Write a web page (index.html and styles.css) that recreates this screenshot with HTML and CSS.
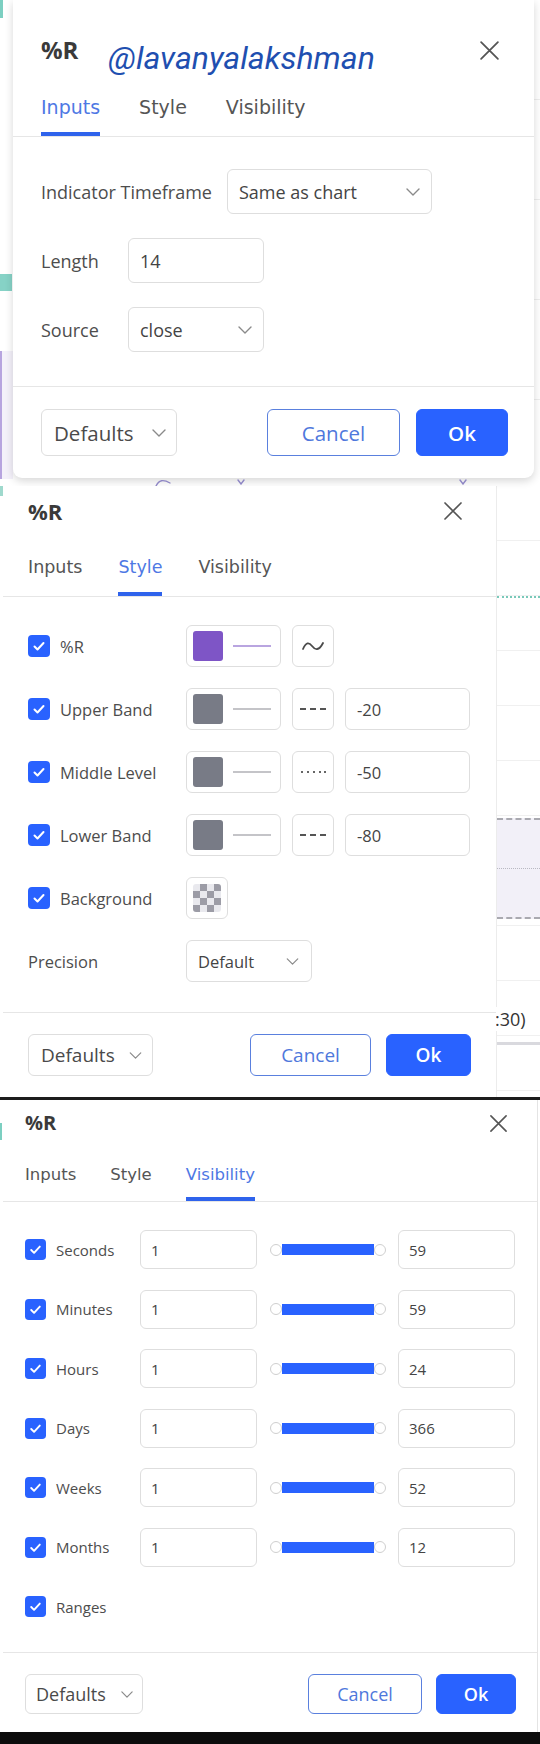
FILE: index.html
```html
<!DOCTYPE html>
<html lang="en">
<head>
<meta charset="utf-8">
<title>%R settings</title>
<link rel="stylesheet" href="styles.css">
</head>
<body>

<!-- Screenshot 1: Inputs tab -->
<section class="shot shot-1">
  <div class="strip strip-l1"><i class="teal-top"></i><i class="teal-bar"></i><i class="lav"></i></div>
  <div class="dialog d1">
    <header class="head">
      <span class="title">%R</span>
      <span class="close"><svg viewBox="0 0 20 20"><path d="M2 2L18 18M18 2L2 18"/></svg></span>
    </header>
    <div class="watermark">@lavanyalakshman</div>
    <nav class="tabs">
      <span class="tab active">Inputs</span><span class="tab">Style</span><span class="tab">Visibility</span>
    </nav>
    <div class="body">
      <div class="row">
        <span class="label wide">Indicator Timeframe</span>
        <div class="field select tf"><span>Same as chart</span><svg class="chev" viewBox="0 0 14 8"><path d="M1 1l6 6 6-6"/></svg></div>
      </div>
      <div class="row">
        <span class="label fixed">Length</span>
        <div class="field len"><span>14</span></div>
      </div>
      <div class="row">
        <span class="label fixed">Source</span>
        <div class="field select len"><span>close</span><svg class="chev" viewBox="0 0 14 8"><path d="M1 1l6 6 6-6"/></svg></div>
      </div>
    </div>
    <footer class="foot">
      <div class="btn defaults"><span>Defaults</span><svg class="chev" viewBox="0 0 14 8"><path d="M1 1l6 6 6-6"/></svg></div>
      <div class="btn cancel">Cancel</div>
      <div class="btn ok">Ok</div>
    </footer>
  </div>
  <div class="strip strip-r1"></div>
  <svg class="mark mark-a" viewBox="0 0 16 8"><path d="M1 7C4 1 8 0 15 4"/></svg>
  <svg class="mark mark-b" viewBox="0 0 8 6"><path d="M1 1l3 4 3-4"/></svg>
  <svg class="mark mark-c" viewBox="0 0 8 6"><path d="M1 1l3 4 3-4"/></svg>
</section>

<!-- Screenshot 2: Style tab -->
<section class="shot shot-2">
  <div class="strip strip-l2"><i class="teal-mark"></i></div>
  <div class="dialog d2">
    <header class="head">
      <span class="title">%R</span>
      <span class="close"><svg viewBox="0 0 20 20"><path d="M2 2L18 18M18 2L2 18"/></svg></span>
    </header>
    <nav class="tabs">
      <span class="tab">Inputs</span><span class="tab active">Style</span><span class="tab">Visibility</span>
    </nav>
    <div class="body">
      <div class="row">
        <label class="chk"><span class="cb"><svg viewBox="0 0 22 22"><rect width="22" height="22" rx="4"/><path d="M6.5 11.5l3 3 6-6.5"/></svg></span><span class="label">%R</span></label>
        <div class="field colorbtn"><span class="sw purple"></span><span class="ln purple"></span></div>
        <div class="field stylebtn"><svg class="ico-wave" viewBox="0 0 22 12"><path d="M1 9C4 2 7 2 10 6S17 11 21 3"/></svg></div>
      </div>
      <div class="row">
        <label class="chk"><span class="cb"><svg viewBox="0 0 22 22"><rect width="22" height="22" rx="4"/><path d="M6.5 11.5l3 3 6-6.5"/></svg></span><span class="label">Upper Band</span></label>
        <div class="field colorbtn"><span class="sw gray"></span><span class="ln"></span></div>
        <div class="field stylebtn"><svg class="ico-dash" viewBox="0 0 26 2"><path d="M0 1h6M10 1h6M20 1h6"/></svg></div>
        <div class="field val"><span>-20</span></div>
      </div>
      <div class="row">
        <label class="chk"><span class="cb"><svg viewBox="0 0 22 22"><rect width="22" height="22" rx="4"/><path d="M6.5 11.5l3 3 6-6.5"/></svg></span><span class="label">Middle Level</span></label>
        <div class="field colorbtn"><span class="sw gray"></span><span class="ln"></span></div>
        <div class="field stylebtn"><svg class="ico-dot" viewBox="0 0 26 2"><path d="M1 1h2M7 1h2M13 1h2M19 1h2M24 1h2"/></svg></div>
        <div class="field val"><span>-50</span></div>
      </div>
      <div class="row">
        <label class="chk"><span class="cb"><svg viewBox="0 0 22 22"><rect width="22" height="22" rx="4"/><path d="M6.5 11.5l3 3 6-6.5"/></svg></span><span class="label">Lower Band</span></label>
        <div class="field colorbtn"><span class="sw gray"></span><span class="ln"></span></div>
        <div class="field stylebtn"><svg class="ico-dash" viewBox="0 0 26 2"><path d="M0 1h6M10 1h6M20 1h6"/></svg></div>
        <div class="field val"><span>-80</span></div>
      </div>
      <div class="row">
        <label class="chk"><span class="cb"><svg viewBox="0 0 22 22"><rect width="22" height="22" rx="4"/><path d="M6.5 11.5l3 3 6-6.5"/></svg></span><span class="label">Background</span></label>
        <div class="field bgbtn"><span class="checker"></span></div>
      </div>
      <div class="row">
        <span class="label prec">Precision</span>
        <div class="field select precsel"><span>Default</span><svg class="chev" viewBox="0 0 14 8"><path d="M1 1l6 6 6-6"/></svg></div>
      </div>
    </div>
    <footer class="foot">
      <div class="btn defaults"><span>Defaults</span><svg class="chev" viewBox="0 0 14 8"><path d="M1 1l6 6 6-6"/></svg></div>
      <div class="btn cancel">Cancel</div>
      <div class="btn ok">Ok</div>
    </footer>
  </div>
  <div class="strip strip-r2">
    <i class="teal-dots"></i>
    <i class="band"><i class="band-mid"></i></i>
    <span class="axis-text">:30)</span>
    <i class="axis-line"></i>
  </div>
</section>

<div class="sep"></div>

<!-- Screenshot 3: Visibility tab -->
<section class="shot shot-3">
  <div class="strip strip-l3"><i class="teal-mark3"></i></div>
  <div class="dialog d3">
    <header class="head">
      <span class="title">%R</span>
      <span class="close"><svg viewBox="0 0 20 20"><path d="M2 2L18 18M18 2L2 18"/></svg></span>
    </header>
    <nav class="tabs">
      <span class="tab">Inputs</span><span class="tab">Style</span><span class="tab active">Visibility</span>
    </nav>
    <div class="body">
      <div class="row">
        <label class="chk"><span class="cb"><svg viewBox="0 0 22 22"><rect width="22" height="22" rx="4"/><path d="M6.5 11.5l3 3 6-6.5"/></svg></span><span class="label">Seconds</span></label>
        <div class="field num"><span>1</span></div>
        <div class="slider"><span class="knob"></span><span class="track"></span><span class="knob"></span></div>
        <div class="field num"><span>59</span></div>
      </div>
      <div class="row">
        <label class="chk"><span class="cb"><svg viewBox="0 0 22 22"><rect width="22" height="22" rx="4"/><path d="M6.5 11.5l3 3 6-6.5"/></svg></span><span class="label">Minutes</span></label>
        <div class="field num"><span>1</span></div>
        <div class="slider"><span class="knob"></span><span class="track"></span><span class="knob"></span></div>
        <div class="field num"><span>59</span></div>
      </div>
      <div class="row">
        <label class="chk"><span class="cb"><svg viewBox="0 0 22 22"><rect width="22" height="22" rx="4"/><path d="M6.5 11.5l3 3 6-6.5"/></svg></span><span class="label">Hours</span></label>
        <div class="field num"><span>1</span></div>
        <div class="slider"><span class="knob"></span><span class="track"></span><span class="knob"></span></div>
        <div class="field num"><span>24</span></div>
      </div>
      <div class="row">
        <label class="chk"><span class="cb"><svg viewBox="0 0 22 22"><rect width="22" height="22" rx="4"/><path d="M6.5 11.5l3 3 6-6.5"/></svg></span><span class="label">Days</span></label>
        <div class="field num"><span>1</span></div>
        <div class="slider"><span class="knob"></span><span class="track"></span><span class="knob"></span></div>
        <div class="field num"><span>366</span></div>
      </div>
      <div class="row">
        <label class="chk"><span class="cb"><svg viewBox="0 0 22 22"><rect width="22" height="22" rx="4"/><path d="M6.5 11.5l3 3 6-6.5"/></svg></span><span class="label">Weeks</span></label>
        <div class="field num"><span>1</span></div>
        <div class="slider"><span class="knob"></span><span class="track"></span><span class="knob"></span></div>
        <div class="field num"><span>52</span></div>
      </div>
      <div class="row">
        <label class="chk"><span class="cb"><svg viewBox="0 0 22 22"><rect width="22" height="22" rx="4"/><path d="M6.5 11.5l3 3 6-6.5"/></svg></span><span class="label">Months</span></label>
        <div class="field num"><span>1</span></div>
        <div class="slider"><span class="knob"></span><span class="track"></span><span class="knob"></span></div>
        <div class="field num"><span>12</span></div>
      </div>
      <div class="row">
        <label class="chk"><span class="cb"><svg viewBox="0 0 22 22"><rect width="22" height="22" rx="4"/><path d="M6.5 11.5l3 3 6-6.5"/></svg></span><span class="label">Ranges</span></label>
      </div>
    </div>
    <footer class="foot">
      <div class="btn defaults"><span>Defaults</span><svg class="chev" viewBox="0 0 14 8"><path d="M1 1l6 6 6-6"/></svg></div>
      <div class="btn cancel">Cancel</div>
      <div class="btn ok">Ok</div>
    </footer>
  </div>
  <div class="strip strip-r3"></div>
</section>

<div class="end"></div>

</body>
</html>
```

FILE: styles.css
```css
* { box-sizing: border-box; }
html, body { margin: 0; padding: 0; }
body {
  width: 540px;
  height: 1744px;
  overflow: hidden;
  background: #ffffff;
  font-family: "Open Sans", "Noto Sans", sans-serif;
  color: #4a4a4a;
}
i { display: block; font-style: normal; }

/* ---------- screenshot frames ---------- */
.shot { display: flex; align-items: flex-start; }
.shot-1 { height: 486px; background: #fff; position: relative; }
.shot-2 { height: 611px; }
.shot-3 { height: 632px; }
.sep { height: 3px; background: #1c1c1c; }
.end { height: 12px; background: #0c0c0c; }

/* chart marks peeking out below dialog 1 */
.mark { position: absolute; top: 479px; fill: none; stroke: #8e86c4; stroke-width: 1.4; stroke-linecap: round; }
.mark-a { left: 155px; width: 16px; height: 8px; }
.mark-b { left: 237px; width: 8px; height: 6px; }
.mark-c { left: 459px; width: 8px; height: 6px; }

/* ---------- chart leftovers around dialogs ---------- */
.strip { align-self: stretch; display: flex; flex-direction: column; background: #fff; }
.strip-l1 { width: 13px; }
.teal-top { width: 3px; height: 18px; background: #7ccfc1; }
.teal-bar { width: 12px; height: 17px; margin-top: 256px; background: #86d2c6; }
.lav { width: 13px; height: 128px; margin-top: 60px; background: #f4f1fa; border-left: 2px solid #b7a4df; }
.strip-r1 {
  width: 6px;
  background: repeating-linear-gradient(to bottom, #fff 0 99px, #eeeeee 99px 100px);
}
.strip-l2 { width: 3px; }
.teal-mark { width: 3px; height: 10px; margin-top: 0; background: #9fd9cd; }
.strip-r2 {
  width: 44px;
  padding-top: 110px;
  border-left: 1px solid #ececec;
  background: repeating-linear-gradient(to bottom, #fff 0 54px, #f0f0f0 54px 55px);
}
.teal-dots { height: 0; border-top: 2px dotted #79c9b9; }
.band {
  margin-top: 220px;
  height: 101px;
  background: #f2f0f8;
  border-top: 2px dashed #a9a9b0;
  border-bottom: 2px dashed #a9a9b0;
  display: flex;
  align-items: center;
}
.band-mid { width: 100%; border-top: 1px dotted #b9b9c2; }
.axis-text {
  margin-top: 88px;
  margin-left: -2px;
  font-size: 18px;
  line-height: 24px;
  color: #333;
  background: #fff;
}
.axis-line { margin-top: 11px; height: 3px; background: #d9d9de; }
.strip-l3 { width: 3px; }
.teal-mark3 { width: 2px; height: 17px; margin-top: 23px; background: #7ccfc1; }
.strip-r3 { width: 3px; border-left: 1px solid #e4e4e4; }

/* ---------- dialog shared ---------- */
.dialog { position: relative; background: #fff; display: flex; flex-direction: column; }
.head { display: flex; justify-content: space-between; align-items: center; }
.title { font-weight: 700; color: #3a3a3a; }
.close { display: flex; }
.close svg { display: block; }
.close path { stroke: #555; stroke-width: 1.7; fill: none; stroke-linecap: round; }

.tabs { display: flex; border-bottom: 1px solid #e6e6e6; }
.tab {
  font-family: "DejaVu Sans", Verdana, sans-serif;
  color: #555;
  border-bottom: 4px solid transparent;
}
.tab.active { color: #4e78e4; border-bottom-color: #2f63ec; }

.body { display: flex; flex-direction: column; }
.row { display: flex; align-items: center; }
.label { color: #4d4d4d; white-space: nowrap; }
.chk { display: flex; align-items: center; }
.cb { display: flex; flex: none; }
.cb svg { width: 100%; height: 100%; }
.cb rect { fill: #2962ff; }
.cb path { fill: none; stroke: #fff; stroke-width: 2; stroke-linecap: round; stroke-linejoin: round; }

.field {
  height: 100%;
  display: flex;
  align-items: center;
  border: 1px solid #dedede;
  border-radius: 6px;
  color: #444;
  flex: none;
}
.select { justify-content: space-between; }
.chev { display: block; flex: none; }
.chev path { fill: none; stroke: #8a8a8a; stroke-width: 1.4; stroke-linecap: round; stroke-linejoin: round; }

.foot { display: flex; align-items: center; border-top: 1px solid #e6e6e6; }
.btn {
  height: 100%;
  display: flex;
  align-items: center;
  justify-content: center;
  border-radius: 6px;
  border: 1px solid #dedede;
  white-space: nowrap;
}
.defaults { justify-content: space-between; color: #4a4a4a; }
.cancel { margin-left: auto; border-color: #5a80de; color: #4f78dc; }
.ok { background: #2962ff; border-color: #2962ff; color: #fff; font-weight: 600; }

/* ---------- dialog 1 : Inputs ---------- */
.d1 {
  width: 521px;
  height: 478px;
  font-size: 18px;
  border-radius: 0 0 9px 9px;
  box-shadow: 0 3px 9px rgba(0, 0, 0, 0.16);
}
.d1 .head { height: 70px; padding: 30px 34px 0 28px; }
.d1 .title { font-size: 24px; line-height: 40px; }
.d1 .close svg { width: 21px; height: 21px; }
.watermark {
  position: absolute;
  left: 95px;
  top: 40px;
  font-family: Roboto, "Liberation Sans", sans-serif;
  font-style: italic;
  font-size: 32px;
  line-height: 36px;
  color: #1f4fb0;
  white-space: nowrap;
}
.d1 .tabs { padding: 25px 28px 0; gap: 39px; }
.d1 .tab { font-size: 19px; line-height: 24px; padding-bottom: 13px; }
.d1 .body { padding: 32px 28px 34px; gap: 24px; }
.d1 .row { height: 45px; }
.d1 .label.wide { width: 186px; }
.d1 .label.fixed { width: 87px; }
.d1 .field { padding: 0 11px 0 11px; }
.d1 .tf { width: 205px; }
.d1 .len { width: 136px; }
.d1 .chev { width: 14px; height: 8px; }
.d1 .foot { padding: 22px 26px 22px 28px; height: 92px; gap: 16px; font-size: 20.5px; }
.d1 .defaults { width: 136px; padding: 0 10px 0 12px; }
.d1 .cancel { width: 133px; }
.d1 .ok { width: 92px; }

/* ---------- dialog 2 : Style ---------- */
.d2 {
  width: 493px;
  height: 611px;
  font-size: 16.5px;
  border-radius: 0 0 6px 6px;
}
.d2 .head { height: 40px; padding: 10px 33px 0 25px; }
.d2 .title { font-size: 22px; line-height: 30px; }
.d2 .close svg { width: 20px; height: 20px; }
.d2 .tabs { padding: 30px 25px 0; gap: 36px; }
.d2 .tab { font-size: 17.5px; line-height: 22px; padding-bottom: 14px; }
.d2 .body { padding: 28px 25px 30px; gap: 21px; }
.d2 .row { height: 42px; }
.d2 .chk { width: 158px; gap: 10px; }
.d2 .cb { width: 22px; height: 22px; }
.d2 .label.prec { width: 158px; }
.d2 .colorbtn { width: 95px; padding-left: 6px; }
.sw { width: 30px; height: 30px; border-radius: 3px; background: #787b86; }
.sw.purple { background: #7e55c6; }
.ln { width: 38px; height: 2px; margin-left: 10px; background: #c4c4c8; }
.ln.purple { background: #b9a5e0; }
.d2 .stylebtn { width: 42px; margin-left: 11px; justify-content: center; }
.ico-wave { width: 22px; height: 12px; }
.ico-wave path { fill: none; stroke: #4a4a4a; stroke-width: 1.8; stroke-linecap: round; }
.ico-dash, .ico-dot { width: 26px; height: 2px; }
.ico-dash path { stroke: #555; stroke-width: 2; }
.ico-dot path { stroke: #666; stroke-width: 2; }
.d2 .val { width: 125px; margin-left: 11px; padding-left: 11px; }
.d2 .bgbtn { width: 42px; justify-content: center; }
.checker {
  width: 28px;
  height: 28px;
  border-radius: 3px;
  background: repeating-conic-gradient(#9c9ca6 0 25%, #e9e9ee 0 50%) 0 0 / 14px 14px;
}
.d2 .precsel { width: 126px; padding: 0 12px 0 11px; }
.d2 .chev { width: 13px; height: 7px; }
.d2 .foot { padding: 21px 25px 21px 25px; height: 85px; gap: 15px; font-size: 19px; }
.d2 .defaults { width: 125px; padding: 0 10px 0 12px; }
.d2 .cancel { width: 121px; }
.d2 .ok { width: 85px; }

/* ---------- dialog 3 : Visibility ---------- */
.d3 {
  width: 534px;
  height: 632px;
  font-size: 15px;
  border-radius: 0 0 6px 6px;
}
.d3 .head { height: 38px; padding: 8px 29px 0 22px; }
.d3 .title { font-size: 20px; line-height: 30px; }
.d3 .close svg { width: 19px; height: 19px; }
.d3 .tabs { padding: 26px 22px 0; gap: 34px; }
.d3 .tab { font-size: 16.5px; line-height: 22px; padding-bottom: 11px; }
.d3 .body { padding: 28px 22px 26px; gap: 20.5px; }
.d3 .row { height: 39px; }
.d3 .chk { width: 115px; gap: 10px; }
.d3 .cb { width: 21px; height: 21px; }
.d3 .num { width: 117px; padding-left: 10px; }
.slider { display: flex; align-items: center; width: 116px; margin: 0 12px 0 13px; flex: none; }
.knob {
  width: 12px;
  height: 12px;
  border-radius: 50%;
  background: #fff;
  border: 1px solid #cfcfcf;
  flex: none;
}
.track { flex: 1; height: 11px; background: #2962ff; }
.d3 .chev { width: 12px; height: 7px; }
.d3 .foot { padding: 21px 21px 18px 22px; height: 80px; gap: 14px; font-size: 18px; }
.d3 .defaults { width: 118px; padding: 0 9px 0 10px; }
.d3 .cancel { width: 114px; }
.d3 .ok { width: 80px; }
```
